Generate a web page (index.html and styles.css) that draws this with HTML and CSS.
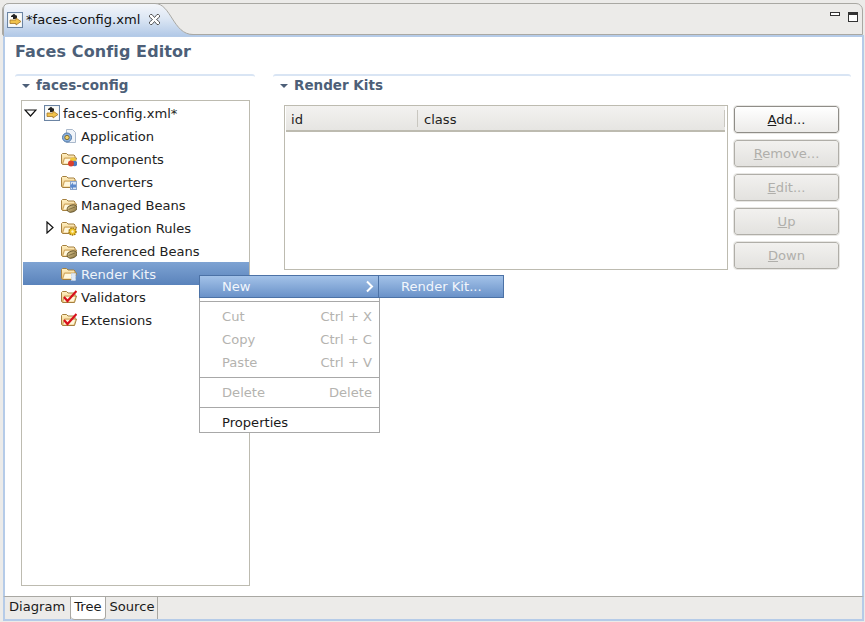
FILE: index.html
```html
<!DOCTYPE html>
<html lang="en">
<head>
<meta charset="utf-8">
<title>faces-config.xml</title>
<link rel="stylesheet" href="styles.css">
</head>
<body>
<svg class="defs" width="0" height="0" aria-hidden="true">
  <defs>
    <linearGradient id="fold" x1="0" y1="0" x2="0" y2="1"><stop offset="0" stop-color="#fff1c4"/><stop offset="1" stop-color="#eec47a"/></linearGradient>
    <linearGradient id="bean" x1="0" y1="0" x2="1" y2="1"><stop offset="0" stop-color="#e0cc94"/><stop offset="1" stop-color="#8a7340"/></linearGradient>
    <symbol id="folder" viewBox="0 0 16 16">
      <path d="M1.500 13.500L.5 12.500V3.500L1.500 2.500H5.500L7 4H13L14 5V7H15.500L13.500 13.500Z" fill="url(#fold)" stroke="#a5803f"/>
      <path d="M1.500 13L3.500 7H15" fill="none" stroke="#c9a25e"/>
      <path d="M4 8H14L12.500 12.500H2.500Z" fill="#fff7dc"/>
    </symbol>
    <symbol id="file" viewBox="0 0 16 16">
      <rect x=".5" y=".5" width="15" height="15" fill="#e6edf5" stroke="#6b84a3"/>
      <rect x="1.500" y="1.500" width="13" height="13" fill="#fbfbf6"/>
      <path d="M6 7V5H4V4L7 1.800L9 3.500H10V7Z" fill="#222"/>
      <path d="M3 8H9V6L14 9.500L9 13V11.500H3Z" fill="#f1c24a" stroke="#a4762a" stroke-width=".8"/>
    </symbol>
  </defs>
</svg>

<div class="window">
  <header class="tabbar">
    <div class="tab">
      <svg class="tab-shape" width="192" height="33" viewBox="0 0 192 33" aria-hidden="true">
        <defs><linearGradient id="tabg" x1="0" y1="0" x2="0" y2="1"><stop offset="0" stop-color="#f4f6fa"/><stop offset=".45" stop-color="#dde7f4"/><stop offset="1" stop-color="#b2c9e7"/></linearGradient></defs>
        <path d="M0 33V6Q0 .5 6 .5H152C168 .5 170 31.500 190 31.500H192V33Z" fill="url(#tabg)"/>
        <path d="M.5 33V6Q.5 .5 6 .5H152C168 .5 170 31.500 190 31.500H192" fill="none" stroke="#a9a8a3"/>
      </svg>
      <svg class="ico tab-ico" width="16" height="16"><use href="#file"/></svg>
      <span class="tab-label">*faces-config.xml</span>
      <svg class="tab-close" width="11" height="11" viewBox="0 0 11 11" aria-hidden="true">
        <path d="M1.500 .5H3L5.500 3.500 8 .5H9.500L10.500 1.500V3L7.500 5.500 10.500 8V9.500L9.500 10.500H8L5.500 7.500 3 10.500H1.500L.5 9.500V8L3.500 5.500 .5 3V1.500Z" fill="#fff" stroke="#444" stroke-width=".9"/>
      </svg>
    </div>
    <div class="view-controls">
      <span class="ctl-min"></span>
      <span class="ctl-max"></span>
    </div>
  </header>

  <main class="content">
    <h1 class="page-title">Faces Config Editor</h1>
    <div class="columns">
      <section class="section section-left">
        <h2 class="section-title"><span class="twist"></span>faces-config</h2>
        <div class="tree">
          <div class="row"><svg class="arrow arrow-open" width="13" height="8" viewBox="0 0 13 8" aria-hidden="true"><path d="M1 1H12L6.500 7Z" fill="#fff" stroke="#111" stroke-width="1.200"/></svg><svg class="ico" width="16" height="16"><use href="#file"/></svg><span>faces-config.xml*</span></div>
          <div class="row lvl"><svg class="ico" width="16" height="16" viewBox="0 0 16 16"><path d="M5.500 1.500H11.500L14.500 4.500V14.500H5.500Z" fill="#f0f4f9" stroke="#a9b8cb"/><circle cx="6" cy="9.500" r="4.500" fill="#8db1dc" stroke="#4f78a8"/><circle cx="6" cy="9.500" r="2.200" fill="#f2d26a" stroke="#6e5a1c" stroke-width=".8"/></svg><span>Application</span></div>
          <div class="row lvl"><svg class="ico" width="16" height="16" viewBox="0 0 16 16"><use href="#folder"/><circle cx="12" cy="9.500" r="3" fill="#efc93a"/><circle cx="13.500" cy="12.500" r="2.800" fill="#4a78c0"/><circle cx="10" cy="12.500" r="3" fill="#d9402e"/></svg><span>Components</span></div>
          <div class="row lvl"><svg class="ico" width="16" height="16" viewBox="0 0 16 16"><use href="#folder"/><rect x="9.500" y="7.500" width="6" height="8" fill="#dbe6f5" stroke="#8aa5cc"/><path d="M9 12l3-3.500v2h3v3h-3v2Z" fill="#5a88cc"/></svg><span>Converters</span></div>
          <div class="row lvl"><svg class="ico" width="16" height="16" viewBox="0 0 16 16"><use href="#folder"/><ellipse cx="11" cy="11.500" rx="5" ry="3.500" fill="url(#bean)" stroke="#6a5a30" transform="rotate(-18 11 11.500)"/><path d="M7.500 12.500L14 10" stroke="#6a5a30" stroke-width=".7"/></svg><span>Managed Beans</span></div>
          <div class="row lvl"><svg class="arrow arrow-closed" width="8" height="13" viewBox="0 0 8 13" aria-hidden="true"><path d="M1 1V12L7 6.500Z" fill="#fff" stroke="#111" stroke-width="1.200"/></svg><svg class="ico" width="16" height="16" viewBox="0 0 16 16"><use href="#folder"/><circle cx="11.500" cy="11.500" r="3.500" fill="#f0c52c" stroke="#a37a10" stroke-dasharray="1.500 .8" stroke-width="1.500"/><circle cx="11.500" cy="11.500" r="1.200" fill="#fff6c8"/></svg><span>Navigation Rules</span></div>
          <div class="row lvl"><svg class="ico" width="16" height="16" viewBox="0 0 16 16"><use href="#folder"/><ellipse cx="11" cy="11.500" rx="5" ry="3.500" fill="url(#bean)" stroke="#6a5a30" transform="rotate(-18 11 11.500)"/><path d="M7.500 12.500L14 10" stroke="#6a5a30" stroke-width=".7"/></svg><span>Referenced Beans</span></div>
          <div class="row lvl row-selected"><svg class="ico" width="16" height="16" viewBox="0 0 16 16"><use href="#folder"/><rect x="10.500" y="7.500" width="4" height="7" fill="#dfe9f6" stroke="#c5d4e8" stroke-dasharray="1 .6"/></svg><span>Render Kits</span></div>
          <div class="row lvl"><svg class="ico" width="16" height="16" viewBox="0 0 16 16"><use href="#folder"/><path d="M3 8L6.500 12 15.500 2" fill="none" stroke="#d8101c" stroke-width="2.200"/></svg><span>Validators</span></div>
          <div class="row lvl"><svg class="ico" width="16" height="16" viewBox="0 0 16 16"><use href="#folder"/><path d="M3 8L6.500 12 15.500 2" fill="none" stroke="#d8101c" stroke-width="2.200"/></svg><span>Extensions</span></div>
        </div>
      </section>

      <section class="section section-right">
        <h2 class="section-title"><span class="twist"></span>Render Kits</h2>
        <div class="kits">
          <div class="table">
            <div class="thead">
              <div class="th th-id">id</div>
              <div class="th th-class">class</div>
            </div>
          </div>
          <div class="buttons">
            <button class="btn btn-on" type="button"><u>A</u>dd...</button>
            <button class="btn" type="button" disabled><u>R</u>emove...</button>
            <button class="btn" type="button" disabled><u>E</u>dit...</button>
            <button class="btn" type="button" disabled><u>U</u>p</button>
            <button class="btn" type="button" disabled><u>D</u>own</button>
          </div>
        </div>
      </section>
    </div>
  </main>

  <footer class="pagetabs">
    <div class="ptab ptab-first">Diagram</div>
    <div class="ptab ptab-active">Tree</div>
    <div class="ptab">Source</div>
  </footer>
</div>

<div class="menu">
  <div class="mi mi-active"><span>New</span><svg class="chev" width="9" height="13" viewBox="0 0 9 13" aria-hidden="true"><path d="M2 1.500L7 6.500 2 11.500" fill="none" stroke="#fff" stroke-width="2"/></svg></div>
  <div class="msep msep-first"></div>
  <div class="mi mi-off"><span>Cut</span><span>Ctrl + X</span></div>
  <div class="mi mi-off"><span>Copy</span><span>Ctrl + C</span></div>
  <div class="mi mi-off"><span>Paste</span><span>Ctrl + V</span></div>
  <div class="msep msep-mid"></div>
  <div class="mi mi-off"><span>Delete</span><span>Delete</span></div>
  <div class="msep"></div>
  <div class="mi mi-last"><span>Properties</span></div>
</div>
<div class="submenu">Render Kit...</div>
</body>
</html>
```
FILE: styles.css
```css
html, body {
  margin: 0;
  padding: 0;
  height: 622px;
  overflow: hidden;
  background: #ecebe9;
  font-family: "DejaVu Sans", sans-serif;
  font-size: 13.1px;
  color: #1a1a1a;
}
.defs { display: block; height: 0; }
.window {
  box-sizing: border-box;
  height: 622px;
  padding: 3px 1px 1px 2px;
  display: flex;
  flex-direction: column;
}
.tabbar {
  height: 32px;
  flex: none;
  display: flex;
  justify-content: space-between;
  align-items: flex-start;
  box-sizing: border-box;
  margin-right: 1px;
  border: 1px solid #a9a8a3;
  border-radius: 7px 7px 0 0;
  background: #ecebe9;
}
.tab {
  width: 190px;
  height: 31px;
  position: relative;
  display: flex;
  align-items: center;
  padding-left: 4px;
  box-sizing: border-box;
  gap: 3px;
}
.tab-shape { position: absolute; left: 0; top: -1px; }
.tab-ico, .tab-label, .tab-close { position: relative; }
.tab-label { color: #111; margin-left: 0; }
.tab-close { margin-left: 6px; }
.view-controls {
  display: flex;
  align-items: flex-start;
  gap: 8px;
  margin: 8px 4px 0 0;
}
.ctl-min {
  width: 8px;
  height: 2px;
  border: 1px solid #333;
  background: #fff;
}
.ctl-max {
  width: 8px;
  height: 6px;
  border: 1px solid #333;
  border-top-width: 3px;
  background: #fff;
}
.content {
  flex: 1;
  min-height: 0;
  background: #fff;
  border: 2px solid #b5cbe8;
  border-bottom: 0;
  margin-left: 1px;
  padding: 5px 10px 0 10px;
}
.page-title {
  margin: 0;
  font-size: 16px;
  line-height: 20px;
  font-weight: bold;
  color: #4d5f78;
  letter-spacing: .1px;
}
.columns {
  display: flex;
  gap: 18px;
  margin-top: 12px;
}
.section {
  border-top: 2px solid #d9e5f4;
  border-radius: 3px 3px 0 0;
  padding-top: 1px;
}
.section-left { width: 240px; }
.section-right { width: 578px; }
.section-title {
  margin: 0;
  font-size: 13.500px;
  line-height: 17px;
  font-weight: bold;
  color: #4d5f78;
  display: flex;
  align-items: center;
}
.twist {
  width: 0;
  height: 0;
  border: 4px solid transparent;
  border-top: 4px solid #4d5f78;
  border-bottom: 0;
  margin: 1px 6px 0 7px;
}
.tree {
  box-sizing: border-box;
  width: 229px;
  height: 486px;
  margin: 6px 0 0 6px;
  border: 1px solid #bdbbb0;
}
.row {
  height: 23px;
  display: flex;
  align-items: center;
  position: relative;
  padding-left: 22px;
  gap: 3px;
  color: #222;
  white-space: nowrap;
}
.row > span { padding-top: 2px; }
.row.lvl { padding-left: 39px; gap: 4px; }
.row-selected {
  margin-left: 1px;
  padding-left: 38px !important;
  background: linear-gradient(#7ea3d3, #5a83bb);
  color: #eef3fa;
}
.ico { flex: none; }
.arrow { position: absolute; }
.arrow-open { left: 2px; top: 8px; }
.arrow-closed { left: 24px; top: 5px; }
.kits {
  display: flex;
  gap: 6px;
  margin: 11px 0 0 11px;
}
.table {
  box-sizing: border-box;
  width: 444px;
  height: 165px;
  border: 1px solid #bdbbb0;
  padding: 0 2px 0 1px;
}
.thead {
  height: 26px;
  display: flex;
  background: linear-gradient(#f3f2f0, #e6e5e2);
  border-bottom: 2px solid #bdbbb0;
  box-sizing: border-box;
  align-items: center;
}
.th { padding-left: 5px; box-sizing: border-box; color: #222; }
.th-id { width: 132px; border-right: 1px solid #c9c7c0; height: 17px; line-height: 19px; }
.th-class { flex: 1; padding-left: 6px; border-right: 1px solid #c9c7c0; height: 17px; line-height: 19px; }
.buttons {
  display: flex;
  flex-direction: column;
  gap: 7px;
  margin-top: 1px;
}
.btn {
  box-sizing: border-box;
  width: 105px;
  height: 27px;
  padding: 0;
  border: 1px solid #b0aea8;
  border-radius: 3px;
  outline: 1px solid #e8e7e4;
  background: linear-gradient(#f2f1ef, #e3e2df);
  font: 13.1px "DejaVu Sans", sans-serif;
  color: #b0afab;
}
.btn-on {
  background: linear-gradient(#fff, #ecebe9);
  border-color: #8f8d88;
  color: #1a1a1a;
}
.pagetabs {
  height: 25px;
  flex: none;
  display: flex;
  box-sizing: border-box;
  margin-left: 1px;
  border-top: 1px solid #a9a8a3;
  border-bottom: 2px solid #b5cbe8;
  border-left: 2px solid #b5cbe8;
  border-right: 2px solid #b5cbe8;
  background: #ecebe9;
}
.ptab {
  padding: 0 3px 0 4px;
  line-height: 20px;
  height: 22px;
  color: #1a1a1a;
  border-right: 1px solid #a9a8a3;
}
.ptab-first { padding-left: 4px; padding-right: 5px; }
.ptab-active {
  background: #fff;
  border-bottom: 1px solid #a9a8a3;
  border-radius: 0 0 4px 4px;
  padding: 0 3px;
  box-sizing: content-box;
}
.menu {
  position: absolute;
  left: 199px;
  top: 275px;
  width: 181px;
  box-sizing: border-box;
  border: 1px solid #a8a8a8;
  background: #fff;
}
.mi {
  height: 23px;
  display: flex;
  justify-content: space-between;
  align-items: center;
  padding: 0 7px 0 22px;
  color: #1a1a1a;
}
.mi-active {
  margin: -1px -1px 0;
  padding: 0 5px 0 22px;
  box-sizing: border-box;
  height: 23px;
  background: linear-gradient(#a3c2e8, #6a92c9);
  border: 1px solid #4c72a6;
  color: #f2f6fc;
}
.mi-off { color: #b4b3af; }
.mi-last { height: 21px; }
.mi-last > span { padding-top: 2px; }
.msep { height: 1px; background: #a8a8a8; margin: 3px 0; }
.msep-first { margin: 3px 0 3px; }
.msep-mid { margin: 3px 0 3px; }
.chev { display: block; }
.submenu {
  position: absolute;
  left: 378px;
  top: 275px;
  box-sizing: border-box;
  width: 126px;
  height: 23px;
  line-height: 21px;
  padding-left: 22px;
  background: linear-gradient(#a3c2e8, #6a92c9);
  border: 1px solid #4c72a6;
  color: #f2f6fc;
}
```
